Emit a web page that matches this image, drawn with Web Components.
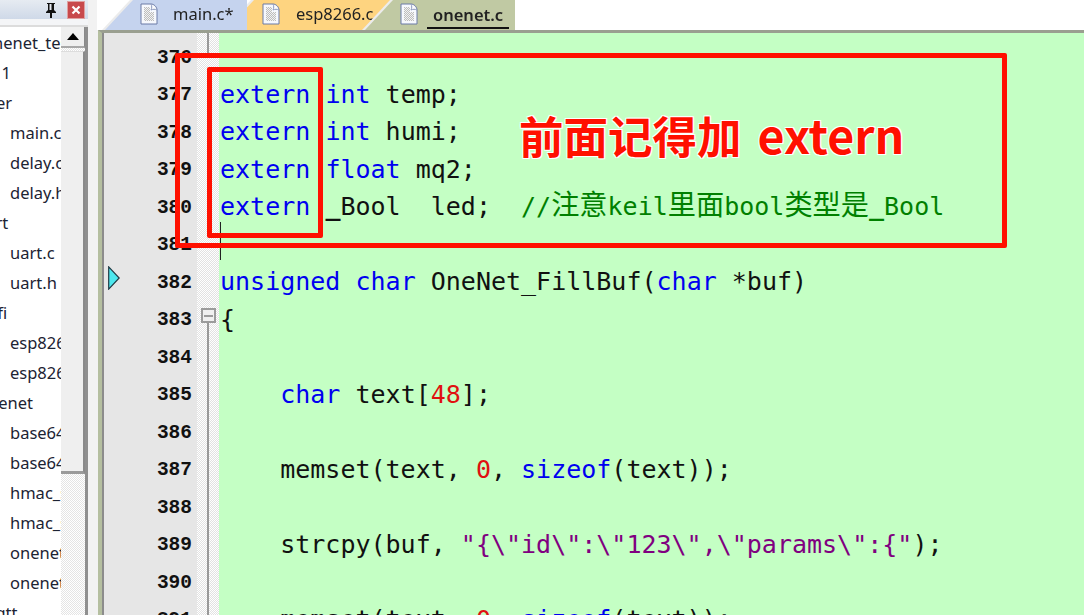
<!DOCTYPE html>
<html lang="zh">
<head>
<meta charset="utf-8">
<title>onenet.c</title>
<style>
  html, body { margin: 0; height: 615px; overflow: hidden; background: #f2f2f2; }
</style>
</head>
<body>
<ide-app>
  <ide-sidebar slot="side">
    <tree-row level="top" shift="-17">onenet_test</tree-row>
    <tree-row level="top" shift="-52">Target 1</tree-row>
    <tree-row level="top" shift="-24">User</tree-row>
    <tree-row>main.c</tree-row>
    <tree-row>delay.c</tree-row>
    <tree-row>delay.h</tree-row>
    <tree-row level="top" shift="-24">uart</tree-row>
    <tree-row>uart.c</tree-row>
    <tree-row>uart.h</tree-row>
    <tree-row level="top" shift="-20">wifi</tree-row>
    <tree-row>esp8266.c</tree-row>
    <tree-row>esp8266.h</tree-row>
    <tree-row level="top" shift="-22">onenet</tree-row>
    <tree-row>base64.c</tree-row>
    <tree-row>base64.h</tree-row>
    <tree-row>hmac_sha1.c</tree-row>
    <tree-row>hmac_sha1.h</tree-row>
    <tree-row>onenet.c</tree-row>
    <tree-row>onenet.h</tree-row>
    <tree-row level="top" shift="-20">mqtt</tree-row>
  </ide-sidebar>
  <ide-tabs slot="tabs">
    <ide-tab color="#c5d3ee" start="0" size="142" layer="3" icon="35" text="68">main.c*</ide-tab>
    <ide-tab color="#fed480" start="-21" size="169" layer="1" icon="36" text="70">esp8266.c</ide-tab>
    <ide-tab color="#c0c9a3" start="-30" size="150" layer="2" icon="35" text="68" active>onenet.c</ide-tab>
  </ide-tabs>
  <ide-editor slot="editor">
    <code-line no="376" fold="end"></code-line>
    <code-line no="377"><code-tok type="kw">extern</code-tok> <code-tok type="kw">int</code-tok> temp;</code-line>
    <code-line no="378"><code-tok type="kw">extern</code-tok> <code-tok type="kw">int</code-tok> humi;</code-line>
    <code-line no="379"><code-tok type="kw">extern</code-tok> <code-tok type="kw">float</code-tok> mq2;</code-line>
    <code-line no="380"><code-tok type="kw">extern</code-tok> <code-tok type="under">_</code-tok>Bool  led;  <code-tok type="comment">//<code-tok type="cjk">注意</code-tok>keil<code-tok type="cjk">里面</code-tok>bool<code-tok type="cjk">类型是</code-tok><code-tok type="under">_</code-tok>Bool</code-tok></code-line>
    <code-line no="381"></code-line>
    <code-line no="382"><code-tok type="kw">unsigned</code-tok> <code-tok type="kw">char</code-tok> OneNet_FillBuf(<code-tok type="kw">char</code-tok> *buf)</code-line>
    <code-line no="383" fold="open">{</code-line>
    <code-line no="384" fold="line"></code-line>
    <code-line no="385" fold="line">    <code-tok type="kw">char</code-tok> text[<code-tok type="num">48</code-tok>];</code-line>
    <code-line no="386" fold="line"></code-line>
    <code-line no="387" fold="line">    memset(text, <code-tok type="num">0</code-tok>, <code-tok type="kw">sizeof</code-tok>(text));</code-line>
    <code-line no="388" fold="line"></code-line>
    <code-line no="389" fold="line">    strcpy(buf, <code-tok type="str">"{\"id\":\"123\",\"params\":{"</code-tok>);</code-line>
    <code-line no="390" fold="line"></code-line>
    <code-line no="391" fold="line">    memset(text, <code-tok type="num">0</code-tok>, <code-tok type="kw">sizeof</code-tok>(text));</code-line>
    <red-box slot="over" x="175" y="53" w="832" h="195"></red-box>
    <red-box slot="over" x="207" y="67" w="116" h="171"></red-box>
    <red-note slot="over" x="519" y="102">前面记得加 <code-tok type="latin">extern</code-tok></red-note>
  </ide-editor>
</ide-app>

<script>
// page shell: side panel on the left, tab strip + editor on the right
class IdeApp extends HTMLElement {
    constructor() {
        super();
        this.attachShadow({ mode: 'open' });
        this.shadowRoot.innerHTML = `
        <style>
        :host { display: grid; grid-template-columns: 97px 1fr; width: 1084px; height: 615px; overflow: hidden; }
        .right { display: flex; flex-direction: column; min-width: 0; height: 615px; }
        </style>
        <slot name="side"></slot>
        <div class="right">
            <slot name="tabs"></slot>
            <slot name="editor"></slot>
        </div>`;
    }
}

class IdeSidebar extends HTMLElement {
    constructor() {
        super();
        this.attachShadow({ mode: 'open' });
        this.shadowRoot.innerHTML = `
        <style>
        :host { display: flex; flex-direction: column; height: 615px; width: 97px; background: #f2f2f2; overflow: hidden; }
        .head { display: flex; align-items: center; justify-content: flex-end; gap: 9px; height: 19px; width: 85px; padding-right: 3px; box-sizing: content-box; background: linear-gradient(#e6ebf2, #cfd9e8); flex: none; }
        .close { width: 18px; height: 18px; background: #c8494c; border: 1px solid #dfa0a0; box-sizing: border-box; display: flex; align-items: center; justify-content: center; }
        .strip { height: 6px; width: 88px; background: #f4f5f7; flex: none; }
        .body { display: flex; flex: 1; width: 88px; min-height: 0; border-top: 2px solid #dcdcdc; border-right: 0; }
        .tree { width: 61px; background: #fff; overflow: hidden; flex: none; padding-top: 1px; color: #1c2333; }
        .bar { width: 24px; flex: none; display: flex; flex-direction: column; background: conic-gradient(#fff 25%, #e4e4e4 0 50%, #fff 0 75%, #e4e4e4 0) 0 0 / 2px 2px; border-right: 3px solid #8f8f8f; }
        .btn { height: 21px; background: #efefef; border-bottom: 2px solid #a8a8a8; border-right: 1px solid #8a8a8a; display: flex; align-items: center; justify-content: center; box-sizing: border-box; }
        .thumb { height: 423px; margin-top: 3px; background: #efefef; border-bottom: 3px solid #9a9a9a; border-right: 2px solid #8a8a8a; border-top: 1px solid #ddd; box-sizing: border-box; }
        </style>
        <div class="head">
            <svg width="14" height="16" viewBox="0 0 14 16"><path d="M3 1h8v1h-1v6l2 2v1H8v5H6v-5H2v-1l2-2V2H3z" fill="#111"/><rect x="5.5" y="2" width="2" height="6" fill="#e4e8ef"/></svg>
            <div class="close"><svg width="10" height="10" viewBox="0 0 10 10"><path d="M1.5 1.5l7 7M8.5 1.5l-7 7" stroke="#fff" stroke-width="2.2"/></svg></div>
        </div>
        <div class="strip"></div>
        <div class="body">
            <div class="tree"><slot></slot></div>
            <div class="bar">
                <div class="btn"><svg width="12" height="7" viewBox="0 0 12 7"><path d="M6 0l6 7H0z" fill="#000"/></svg></div>
                <div class="thumb"></div>
            </div>
        </div>`;
    }
}

class TreeRow extends HTMLElement {
    constructor() {
        super();
        this.attachShadow({ mode: 'open' });
        this.shadowRoot.innerHTML = `
        <style>
        :host { display: block; height: 30px; line-height: 30px; white-space: nowrap; font: 16.5px/30px "Noto Sans", "Liberation Sans", sans-serif; padding-left: 10px; }
        :host([level=top]) { padding-left: 0; }
        </style>
        <slot></slot>`;
    }
    connectedCallback() {
        if (this.hasAttribute('shift')) this.style.marginLeft = this.getAttribute('shift') + 'px';
    }
}

class IdeTabs extends HTMLElement {
    constructor() {
        super();
        this.attachShadow({ mode: 'open' });
        this.shadowRoot.innerHTML = `
        <style>
        :host { display: flex; flex: none; height: 30px; padding-left: 8px; background: #fff; border-left: 0; }
        </style>
        <slot></slot>`;
    }
}

class IdeTab extends HTMLElement {
    constructor() {
        super();
        this.attachShadow({ mode: 'open' });
        this.shadowRoot.innerHTML = `
        <style>
        :host { display: block; position: relative; height: 30px; flex: none; filter: drop-shadow(-3px 0 0 #ececec); font: 16.5px/28px "Noto Sans", "Liberation Sans", sans-serif; color: #222; }
        :host([active]) { font-weight: 600; }
        .shape { height: 100%; clip-path: polygon(0 100%, 28px 0, 100% 0, 100% 100%); display: flex; align-items: center; }
        svg { flex: none; margin-top: -3px; }
        .name { white-space: nowrap; padding-bottom: 2px; }
        :host([active]) .name { border-bottom: 2px solid #111; margin-top: 2px; line-height: 24px; padding: 0 6px; margin-left: -6px; }
        </style>
        <div class="shape">
            <svg width="18" height="22" viewBox="0 0 18 22">
                <defs><pattern id="dots" width="2" height="2" patternUnits="userSpaceOnUse"><rect width="2" height="2" fill="#f2f2f2"/><rect width="1" height="1" fill="#bdbdbd"/><rect x="1" y="1" width="1" height="1" fill="#bdbdbd"/></pattern></defs>
                <path d="M1 1h10c3 0 6 3 6 6v14H1z" fill="#f6f8fd" stroke="#6a7aa6"/>
                <path d="M11 1c1 2 1 4 0 6 2-1 4-1 6 0" fill="#fff" stroke="#8a98bd"/>
                <path d="M4 4h6v5h4v9H4z" fill="url(#dots)"/>
            </svg>
            <span class="name"><slot></slot></span>
        </div>`;
    }
    connectedCallback() {
        this.style.marginLeft = this.getAttribute('start') + 'px';
        this.style.width = this.getAttribute('size') + 'px';
        this.style.zIndex = this.getAttribute('layer');
        const shape = this.shadowRoot.querySelector('.shape');
        shape.style.background = this.getAttribute('color');
        const svg = this.shadowRoot.querySelector('svg');
        svg.style.marginLeft = this.getAttribute('icon') + 'px';
        svg.style.marginRight = (this.getAttribute('text') - this.getAttribute('icon') - 18) + 'px';
    }
}

class IdeEditor extends HTMLElement {
    constructor() {
        super();
        this.attachShadow({ mode: 'open' });
        this.shadowRoot.innerHTML = `
        <style>
        :host { display: block; flex: 1; min-height: 0; position: relative; overflow: hidden; border-top: 3px solid #9a9f90; border-left: 4px solid #b5bfa0; box-shadow: inset 2px 0 0 #8c8c8c;
            margin-left: 1px; padding-left: 2px; padding-top: 6.75px; box-sizing: border-box;
            background:
              linear-gradient(#e6e6e6, #e6e6e6) 0 0 / 95px 100% no-repeat,
              conic-gradient(#fff 25%, #e2e2e2 0 50%, #fff 0 75%, #e2e2e2 0) 0 0 / 2px 2px,
              #c4ffc4;
        }
        .paint { position: absolute; inset: 0 0 0 117px; background: #c4ffc4; }
        .lines { position: relative; }
        .over { position: absolute; left: -102px; top: -33px; width: 1084px; height: 615px; pointer-events: none; }
        .caret { position: absolute; left: 220px; top: 222px; width: 1px; height: 38px; background: #222; }
        .mark { position: absolute; left: 108px; top: 266px; }
        </style>
        <div class="paint"></div>
        <div class="lines"><slot></slot></div>
        <div class="over">
            <div class="caret"></div>
            <svg class="mark" width="12" height="24" viewBox="0 0 12 24"><path d="M.7.9L11.2 12 .7 23.1z" fill="#4de8ee" stroke="#1f3a44" stroke-width="1.2"/></svg>
            <slot name="over"></slot>
        </div>`;
    }
}

class CodeLine extends HTMLElement {
    constructor() {
        super();
        this.attachShadow({ mode: 'open' });
        this.shadowRoot.innerHTML = `
        <style>
        :host { display: grid; grid-template-columns: 93px 22px 1fr; height: 37.5px; line-height: 37.5px; white-space: pre; }
        .no { text-align: right; padding-right: 5px; box-sizing: border-box; font: bold 19.5px/37.5px "Liberation Mono", monospace; color: #111; }
        .fold { position: relative; }
        .code { padding-left: 1px; margin-top: -1.5px; font: 25px/37.5px "DejaVu Sans Mono", "Noto Sans CJK SC", monospace; color: #111; }
        .rule { position: absolute; left: 10px; width: 2px; background: #999; }
        .box { position: absolute; left: 4px; top: 6px; width: 15px; height: 15px; box-sizing: border-box; border: 2px solid #9c9c9c; background: #f0f0f0; display: flex; align-items: center; justify-content: center; }
        .box i { display: block; width: 9px; height: 2px; background: #9c9c9c; }
        </style>
        <div class="no"></div>
        <div class="fold"></div>
        <div class="code"><slot></slot></div>`;
    }
    connectedCallback() {
        this.shadowRoot.querySelector('.no').textContent = this.getAttribute('no');
        const fold = this.shadowRoot.querySelector('.fold');
        const kind = this.getAttribute('fold');
        if (kind === 'end') fold.innerHTML = '<div class="rule" style="top:-8px;height:23px"></div>';
        if (kind === 'line') fold.innerHTML = '<div class="rule" style="top:0;bottom:0"></div>';
        if (kind === 'open') fold.innerHTML = '<div class="rule" style="top:20px;bottom:0"></div><div class="box"><i></i></div>';
    }
}

class CodeTok extends HTMLElement {
    constructor() {
        super();
        this.attachShadow({ mode: 'open' });
        // no whitespace around the slot: code lines are white-space: pre and it would show
        this.shadowRoot.innerHTML = `<style>
        :host([type=kw]) { color: #0000f0; }
        :host([type=num]) { color: #e01010; }
        :host([type=str]) { color: #800080; }
        :host([type=comment]) { color: #008000; }
        :host([type=cjk]) { font-family: "Noto Sans CJK SC", sans-serif; font-size: 28.2px; line-height: 0; }
        :host([type=under]) { font-weight: bold; }
        :host([type=latin]) { font-size: 46.5px; margin-left: 6px; }
        </style><slot></slot>`;
    }
}

// free annotations drawn on top of the screenshot
class RedBox extends HTMLElement {
    constructor() {
        super();
        this.attachShadow({ mode: 'open' });
        this.shadowRoot.innerHTML = `
        <style>
        :host { display: block; position: absolute; box-sizing: border-box; border: 5px solid #ff1000; border-radius: 2px; }
        </style>`;
    }
    connectedCallback() {
        this.style.left = this.getAttribute('x') + 'px';
        this.style.top = this.getAttribute('y') + 'px';
        this.style.width = this.getAttribute('w') + 'px';
        this.style.height = this.getAttribute('h') + 'px';
    }
}

class RedNote extends HTMLElement {
    constructor() {
        super();
        this.attachShadow({ mode: 'open' });
        this.shadowRoot.innerHTML = `
        <style>
        :host { display: block; position: absolute; white-space: nowrap; font: 700 44.5px/64px "Noto Sans CJK SC", sans-serif; color: #ff1000; text-shadow: 1px 1px 0 #fff, -1px -1px 0 #fff, 1px -1px 0 #fff, -1px 1px 0 #fff; }
        </style>
        <slot></slot>`;
    }
    connectedCallback() {
        this.style.left = this.getAttribute('x') + 'px';
        this.style.top = this.getAttribute('y') + 'px';
    }
}

customElements.define('ide-app', IdeApp);
customElements.define('ide-sidebar', IdeSidebar);
customElements.define('tree-row', TreeRow);
customElements.define('ide-tabs', IdeTabs);
customElements.define('ide-tab', IdeTab);
customElements.define('ide-editor', IdeEditor);
customElements.define('code-line', CodeLine);
customElements.define('code-tok', CodeTok);
customElements.define('red-box', RedBox);
customElements.define('red-note', RedNote);
</script>
</body>
</html>
